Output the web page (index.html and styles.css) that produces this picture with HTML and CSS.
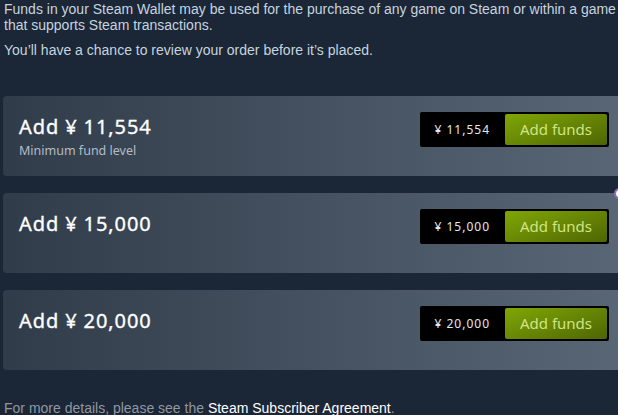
FILE: index.html
```html
<!DOCTYPE html>
<html lang="en">
<head>
    <meta charset="UTF-8">
    <meta name="viewport" content="width=device-width, initial-scale=1.0">
    <title>Add funds to your Steam Wallet</title>
    <link rel="stylesheet" href="styles.css">
</head>
<body>
    <div class="intro">
        <p>Funds in your Steam Wallet may be used for the purchase of any game on Steam or within a game that supports Steam transactions.</p>
        <p>You’ll have a chance to review your order before it’s placed.</p>
    </div>

    <div class="options">
        <div class="option">
            <div class="option-info">
                <div class="option-title">Add ¥ 11,554</div>
                <div class="option-sub">Minimum fund level</div>
            </div>
            <div class="purchase">
                <span class="price">¥ 11,554</span>
                <a class="btn-green" href="#">Add funds</a>
            </div>
        </div>
        <div class="option">
            <div class="option-info">
                <div class="option-title">Add ¥ 15,000</div>
            </div>
            <div class="purchase">
                <span class="price">¥ 15,000</span>
                <a class="btn-green" href="#">Add funds</a>
            </div>
        </div>
        <div class="option">
            <div class="option-info">
                <div class="option-title">Add ¥ 20,000</div>
            </div>
            <div class="purchase">
                <span class="price">¥ 20,000</span>
                <a class="btn-green" href="#">Add funds</a>
            </div>
        </div>
    </div>

    <p class="footer-note">For more details, please see the <a href="#">Steam Subscriber Agreement</a>.</p>

    <span class="cursor-dot"></span>
</body>
</html>
```

FILE: styles.css
```css
html, body {
    overflow: hidden;
}
body {
    margin: 0;
    padding: 1px 0 0 3px;
    background-color: #1b2637;
    font-family: "Liberation Sans", Arial, sans-serif;
    font-size: 14px;
    line-height: 16px;
    color: #c6d4df;
    position: relative;
    height: 414px;
}
.intro p {
    margin: 0 0 9px 1px;
}
.options {
    margin-top: 38px;
    padding-bottom: 1px;
}
.option {
    box-sizing: border-box;
    width: 622px;
    height: 80px;
    margin-bottom: 17px;
    padding: 16px 16px 0 16px;
    border-radius: 4px;
    background: linear-gradient(to right, #313c4a, #586675);
    display: flex;
    justify-content: space-between;
    align-items: flex-start;
}
.option-title {
    font-family: "Noto Sans", sans-serif;
    font-size: 20px;
    line-height: 30px;
    letter-spacing: 0.9px;
    color: #ffffff;
    -webkit-text-stroke: 0.35px #ffffff;
}
.option-sub {
    margin-top: 1px;
    font-family: "Noto Sans", sans-serif;
    font-size: 12.5px;
    line-height: 16px;
    color: #b3bcc6;
}
.purchase {
    display: flex;
    align-items: center;
    background-color: #000000;
    border-radius: 2px;
    padding: 2px 2px 2px 14px;
    gap: 15px;
}
.price {
    font-family: "Noto Sans", sans-serif;
    font-size: 12px;
    letter-spacing: 1px;
    color: #e4e8eb;
}
.btn-green {
    display: block;
    width: 102px;
    height: 31px;
    line-height: 31px;
    text-align: center;
    border-radius: 2px;
    background: linear-gradient(160deg, #80a606 0%, #4e6604 100%);
    font-family: "Noto Sans", sans-serif;
    font-size: 15px;
    color: #cfe583;
    text-decoration: none;
}
.footer-note {
    margin: 12px 0 0 1px;
    color: #8f98a0;
}
.footer-note a {
    color: #ffffff;
    text-decoration: none;
}
.cursor-dot {
    position: absolute;
    left: 614px;
    top: 188px;
    width: 7px;
    height: 7px;
    border: 2px solid #8a6fb3;
    border-radius: 50%;
    background-color: #ffffff;
}
```
